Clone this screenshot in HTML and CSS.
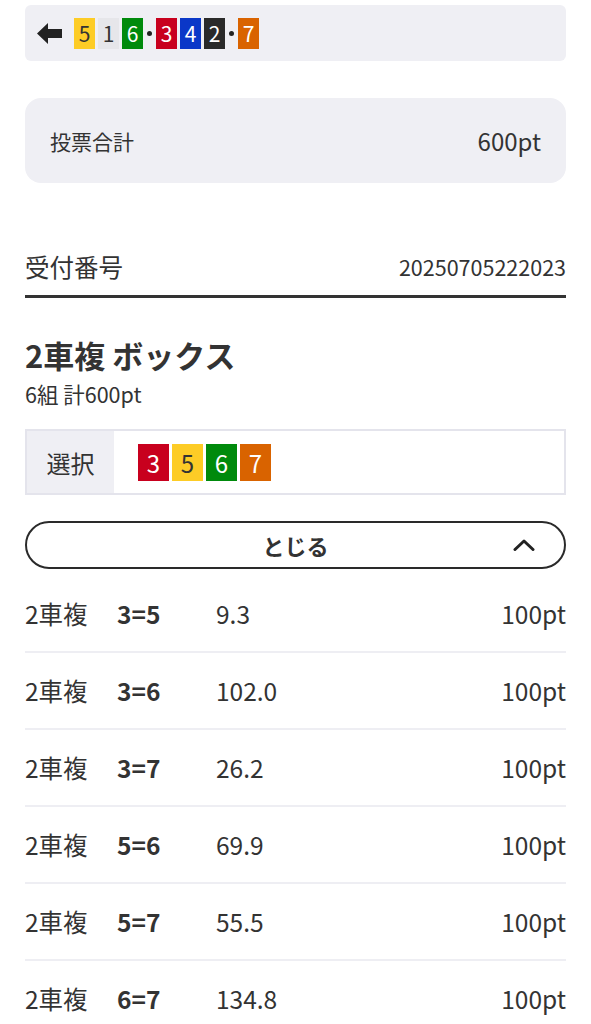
FILE: index.html
```html
<!DOCTYPE html>
<html lang="ja">
<head>
    <meta charset="UTF-8">
    <title>投票内容</title>
    <link rel="stylesheet" href="styles.css">
</head>
<body>
    <div class="page">
        <div class="race-bar">
            <svg class="back" width="25" height="21" viewBox="0 0 25 21">
                <path d="M0 10.5 L11 0 L11 6 L25 6 L25 15 L11 15 L11 21 Z" fill="#222"/>
            </svg>
            <div class="nums">
                <span class="num c5">5</span>
                <span class="num c1">1</span>
                <span class="num c6">6</span>
                <span class="dot"></span>
                <span class="num c3">3</span>
                <span class="num c4">4</span>
                <span class="num c2">2</span>
                <span class="dot"></span>
                <span class="num c7">7</span>
            </div>
        </div>

        <div class="total">
            <span class="total-label">投票合計</span>
            <span class="total-value">600pt</span>
        </div>

        <div class="receipt">
            <span class="receipt-label">受付番号</span>
            <span class="receipt-no">20250705222023</span>
        </div>

        <h2 class="bet-title">2車複 ボックス</h2>
        <p class="bet-sub">6組 計600pt</p>

        <div class="select">
            <div class="select-label">選択</div>
            <div class="select-nums">
                <span class="num big c3">3</span>
                <span class="num big c5">5</span>
                <span class="num big c6">6</span>
                <span class="num big c7">7</span>
            </div>
        </div>

        <button class="toggle" type="button">
            <span>とじる</span>
            <svg class="chev" width="22" height="12" viewBox="0 0 22 12">
                <path d="M2 10.5 L11 2 L20 10.5" fill="none" stroke="#222" stroke-width="3" stroke-linecap="round" stroke-linejoin="round"/>
            </svg>
        </button>

        <ul class="bets">
            <li><span class="kind">2車複</span><b class="pair">3=5</b><span class="odds">9.3</span><span class="pt">100pt</span></li>
            <li><span class="kind">2車複</span><b class="pair">3=6</b><span class="odds">102.0</span><span class="pt">100pt</span></li>
            <li><span class="kind">2車複</span><b class="pair">3=7</b><span class="odds">26.2</span><span class="pt">100pt</span></li>
            <li><span class="kind">2車複</span><b class="pair">5=6</b><span class="odds">69.9</span><span class="pt">100pt</span></li>
            <li><span class="kind">2車複</span><b class="pair">5=7</b><span class="odds">55.5</span><span class="pt">100pt</span></li>
            <li><span class="kind">2車複</span><b class="pair">6=7</b><span class="odds">134.8</span><span class="pt">100pt</span></li>
        </ul>
    </div>
</body>
</html>
```

FILE: styles.css
```css
body {
    margin: 0;
    background-color: #fff;
    color: #333;
    font-family: "Noto Sans CJK JP", "Noto Sans", sans-serif;
}
.page {
    padding: 5px 25px 40px;
}
.race-bar {
    height: 56px;
    background-color: #efeff4;
    border-radius: 6px;
    display: flex;
    align-items: center;
    padding-left: 12px;
    gap: 12px;
}
.back {
    display: block;
}
.nums {
    display: flex;
    align-items: center;
    gap: 3px;
}
.num {
    width: 21px;
    height: 31px;
    display: flex;
    align-items: center;
    justify-content: center;
    font-size: 21px;
    color: #fff;
    box-sizing: border-box;
}
.num.big {
    width: 31px;
    height: 37px;
    font-size: 24px;
}
.dot {
    width: 5px;
    height: 5px;
    border-radius: 50%;
    background-color: #222;
    margin: 0 1px;
}
.c1 { background-color: #e6e6ea; color: #333; }
.c2 { background-color: #2a2a2a; }
.c3 { background-color: #c8001e; }
.c4 { background-color: #0a37c8; }
.c5 { background-color: #fdcc26; color: #333; }
.c6 { background-color: #008a0c; }
.c7 { background-color: #d96300; }

.total {
    margin-top: 37px;
    height: 85px;
    background-color: #efeff4;
    border-radius: 16px;
    display: flex;
    align-items: center;
    justify-content: space-between;
    padding: 0 25px;
}
.total-label {
    font-size: 21px;
}
.total-value {
    font-size: 24px;
}
.receipt {
    margin-top: 60px;
    display: flex;
    justify-content: space-between;
    align-items: center;
    height: 46px;
    padding-bottom: 6px;
    border-bottom: 3px solid #333;
}
.receipt-label {
    font-size: 24.5px;
}
.receipt-no {
    font-size: 21.5px;
}
.bet-title {
    margin: 37px 0 0;
    font-size: 31px;
    line-height: 40px;
    font-weight: 700;
}
.bet-sub {
    margin: 0;
    font-size: 21.5px;
    line-height: 38px;
}
.select {
    margin-top: 16px;
    height: 66px;
    border: 2px solid #e4e4ec;
    box-sizing: border-box;
    display: flex;
}
.select-label {
    width: 87px;
    background-color: #efeff4;
    display: flex;
    align-items: center;
    justify-content: center;
    font-size: 24px;
}
.select-nums {
    display: flex;
    align-items: center;
    gap: 3px;
    padding-left: 24px;
}
.toggle {
    margin-top: 26px;
    width: 100%;
    height: 48px;
    border: 2.5px solid #2a2a2a;
    border-radius: 24px;
    background-color: #fff;
    position: relative;
    font-family: inherit;
    font-size: 22px;
    font-weight: 700;
    color: #333;
    display: flex;
    align-items: center;
    justify-content: center;
    padding: 0;
}
.chev {
    position: absolute;
    right: 29px;
    top: 16px;
}
.bets {
    list-style: none;
    margin: 7px 0 0;
    padding: 0;
}
.bets li {
    height: 75px;
    border-bottom: 2px solid #eeeef3;
    display: flex;
    align-items: center;
    font-size: 24.5px;
}
.kind {
    width: 92px;
}
.pair {
    width: 99px;
    font-weight: 700;
}
.odds {
    flex: 1;
}
```
